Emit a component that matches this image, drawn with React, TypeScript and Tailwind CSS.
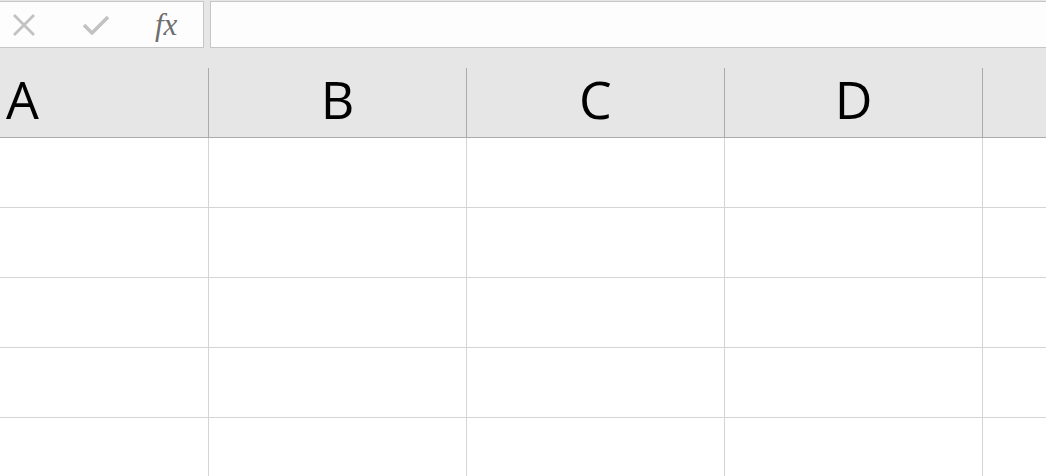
import React from "react";

const cols = [
  { label: "A", w: "w-[209px]", align: "justify-start pl-[6px]" },
  { label: "B", w: "w-[258px]", align: "justify-center" },
  { label: "C", w: "w-[258px]", align: "justify-center" },
  { label: "D", w: "w-[258px]", align: "justify-center" },
];

export default function App() {
  return (
    <div
      className="w-[1046px] h-[476px] overflow-hidden bg-white flex flex-col"
      style={{ fontFamily: '"Open Sans", "Noto Sans", sans-serif' }}
    >
      {/* Formula bar */}
      <div className="flex h-[48px] bg-[#e6e6e6] pt-[1px] shrink-0">
        <div className="w-[204px] h-[47px] bg-[#fdfdfd] border-y border-r border-[#c6c6c6] flex items-center">
          <div className="w-[46px] flex justify-center pl-[1px]">
            <svg width="24" height="22" viewBox="0 0 24 22">
              <path d="M2 1 L22 21 M22 1 L2 21" stroke="#c2c2c2" strokeWidth="2.8" fill="none" />
            </svg>
          </div>
          <div className="w-[30px]" />
          <div className="w-[40px] flex justify-center">
            <svg width="28" height="22" viewBox="0 0 28 22">
              <path d="M2 11 L10 19 L26 3" stroke="#c2c2c2" strokeWidth="3.6" fill="none" strokeLinejoin="round" />
            </svg>
          </div>
          <div className="w-[39px]" />
          <span
            className="text-[31px] italic text-[#6e6e6e] leading-none -mt-[1px]"
            style={{ fontFamily: '"Liberation Serif", "DejaVu Serif", serif' }}
          >
            fx
          </span>
        </div>
        <div className="w-[6px]" />
        <div className="flex-1 h-[47px] bg-[#fdfdfd] border-y border-l border-[#c6c6c6]" />
      </div>

      {/* Column header */}
      <div className="flex h-[90px] bg-[#e6e6e6] border-b border-[#ababab] shrink-0">
        {cols.map((c) => (
          <div key={c.label} className={`${c.w} flex shrink-0`}>
            <div className={`flex-1 flex ${c.align} pt-[25px]`}>
              <span className="text-[52px] leading-none text-black">{c.label}</span>
            </div>
            <div className="w-px h-[69px] self-end bg-[#ababab]" />
          </div>
        ))}
        <div className="flex-1" />
      </div>

      {/* Grid rows */}
      {[0, 1, 2, 3, 4].map((r) => (
        <div key={r} className="flex h-[70px] border-b border-[#d4d4d4] shrink-0">
          {cols.map((c) => (
            <div key={c.label} className={`${c.w} shrink-0 border-r border-[#d4d4d4]`} />
          ))}
          <div className="flex-1" />
        </div>
      ))}
    </div>
  );
}
